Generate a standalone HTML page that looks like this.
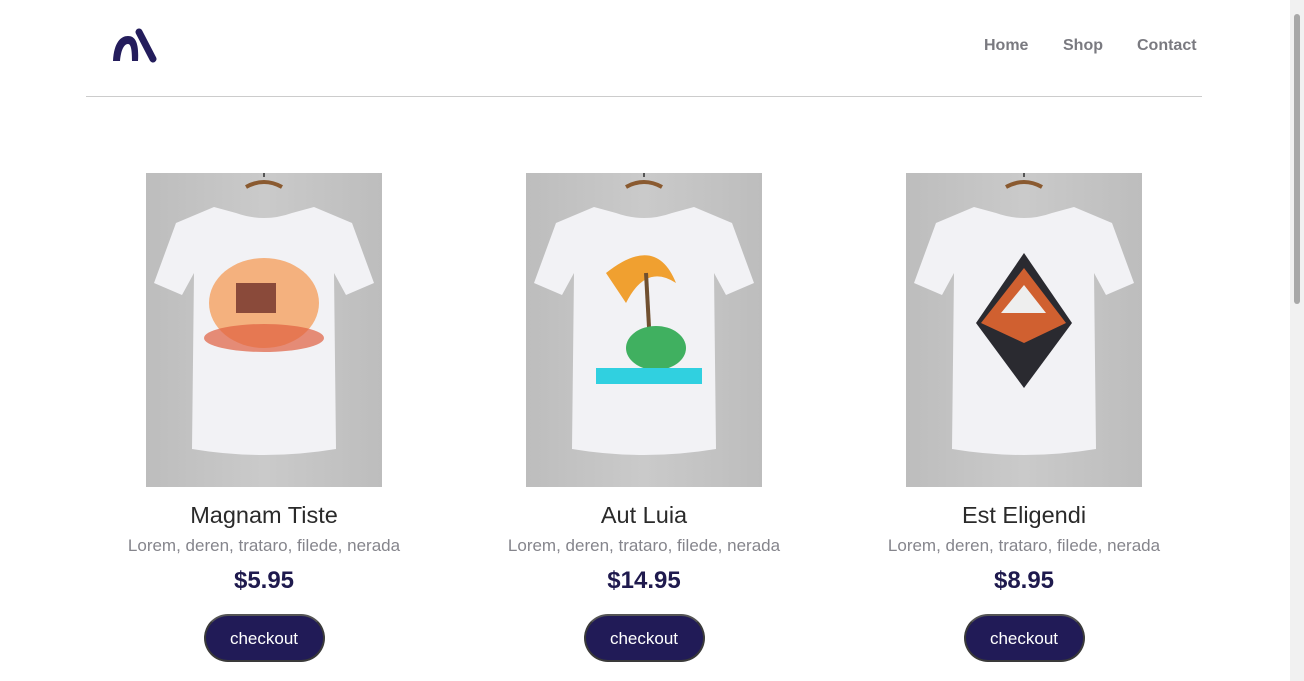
<!DOCTYPE html>
<html><head><meta charset="utf-8"><style>
*{margin:0;padding:0;box-sizing:border-box}
body{width:1304px;height:681px;overflow:hidden;background:#fff;font-family:"Liberation Sans",sans-serif;position:relative}
.sb{position:absolute;right:0;top:0;width:14px;height:681px;background:#f1f1f1}
.sb div{position:absolute;left:4px;top:14px;width:6px;height:290px;background:#a8a8a8;border-radius:3px}
.hdr{position:absolute;left:86px;top:0;width:1116px;height:97px;border-bottom:1px solid #ccc}
.nav{position:absolute;top:37px;font-size:16px;font-weight:bold;color:#7a7a80}
.card{position:absolute;top:173px;width:300px;text-align:center}
.img{width:236px;height:314px;margin:0 auto;background:linear-gradient(90deg,#bdbdbd,#cacaca 50%,#bdbdbd)}
h2{font-weight:normal;font-size:23.5px;color:#2a2a2a;margin-top:15px;line-height:26px}
p{font-size:17px;color:#85858c;margin-top:8px}
.pr{font-size:24px;font-weight:bold;color:#1f1a4e;margin-top:11px}
.btn{display:inline-block;margin-top:19px;width:121px;height:48px;border-radius:24px;background:#211b57;color:#fff;font-size:17px;line-height:46px;border:2px solid #3a3a3a;border-top-color:#555}
</style></head><body>
<div class="hdr">
<svg style="position:absolute;left:26px;top:28px" width="48" height="36" viewBox="0 0 48 36"><path d="M1 33 C2 14 9 8 16 8 C24 8 27 16 26 33 L20 33 C20 22 19 16 16 16 C12 16 9 22 8 33 Z" fill="#241d5c"/><path d="M27 4 L41 31" stroke="#241d5c" stroke-width="7" stroke-linecap="round"/></svg>
<span class="nav" style="left:898px">Home</span>
<span class="nav" style="left:977px">Shop</span>
<span class="nav" style="left:1051px">Contact</span>
</div>
<svg width="0" height="0" style="position:absolute"><defs><g id="t">
<path d="M100 14 Q118 4 136 14" stroke="#8a5a30" stroke-width="4" fill="none"/>
<path d="M118 4 l0-8" stroke="#555" stroke-width="2"/>
<path d="M90 40 L68 34 L30 50 L8 110 L36 122 L48 100 L46 276 Q118 288 190 276 L188 100 L200 122 L228 110 L206 50 L168 34 L146 40 Q118 50 90 40Z" fill="#f2f2f5"/>
</g></defs></svg>
<div class="card" style="left:114px"><div class="img"><svg width="236" height="314"><use href="#t"/><ellipse cx="118" cy="130" rx="55" ry="45" fill="#f4a060" opacity=".8"/><rect x="90" y="110" width="40" height="30" fill="#8a4a3a"/><ellipse cx="118" cy="165" rx="60" ry="14" fill="#e06040" opacity=".7"/></svg></div>
<h2>Magnam Tiste</h2><p>Lorem, deren, trataro, filede, nerada</p><div class="pr">$5.95</div><div class="btn">checkout</div></div>
<div class="card" style="left:494px"><div class="img"><svg width="236" height="314"><use href="#t"/><path d="M80 100 Q130 60 150 110 Q120 90 100 130Z" fill="#f0a030"/><path d="M120 100 L125 190" stroke="#705030" stroke-width="4"/><ellipse cx="130" cy="175" rx="30" ry="22" fill="#40b060"/><rect x="70" y="195" width="106" height="16" fill="#30d0e0"/></svg></div>
<h2>Aut Luia</h2><p>Lorem, deren, trataro, filede, nerada</p><div class="pr">$14.95</div><div class="btn">checkout</div></div>
<div class="card" style="left:874px"><div class="img"><svg width="236" height="314"><use href="#t"/><path d="M118 80 L166 150 L118 215 L70 150Z" fill="#2a2a30"/><path d="M75 150 L118 95 L160 150 L118 170Z" fill="#d06030"/><path d="M95 140 L118 112 L140 140Z" fill="#eee"/></svg></div>
<h2>Est Eligendi</h2><p>Lorem, deren, trataro, filede, nerada</p><div class="pr">$8.95</div><div class="btn">checkout</div></div>
<div class="sb"><div></div></div>
</body></html>
